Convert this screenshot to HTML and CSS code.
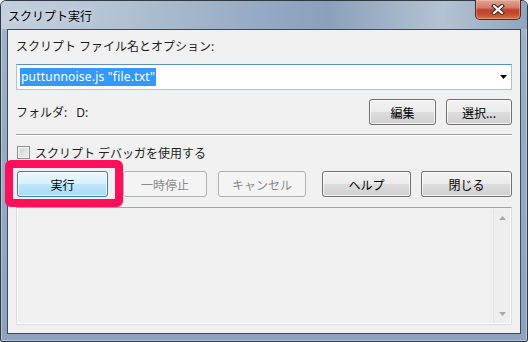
FILE: index.html
```html
<!DOCTYPE html>
<html lang="ja">
<head>
    <meta charset="UTF-8">
    <title>スクリプト実行</title>
    <link rel="stylesheet" href="styles.css">
</head>
<body>
    <div class="window">
        <div class="titlebar">
            <span class="title">スクリプト実行</span>
            <div class="close-btn">
                <svg width="14" height="11" viewBox="0 0 14 11">
                    <path d="M3 2 L11 9 M11 2 L3 9" stroke="#3a2a2a" stroke-width="4.2" stroke-linecap="square" fill="none"/>
                    <path d="M3 2 L11 9 M11 2 L3 9" stroke="#ffffff" stroke-width="2.2" stroke-linecap="square" fill="none"/>
                </svg>
            </div>
        </div>

        <div class="client">
            <div class="label">スクリプト ファイル名とオプション:</div>
            <div class="combo">
                <span class="combo-text">puttunnoise.js "file.txt"</span>
                <svg class="combo-arrow" width="7" height="4" viewBox="0 0 7 4">
                    <path d="M0 0 H7 L3.5 4 Z" fill="#000"/>
                </svg>
            </div>

            <div class="folder-row">
                <span class="folder">フォルダ:<span class="folder-path">D:</span></span>
                <button class="btn btn-edit">編集</button>
                <button class="btn btn-select">選択...</button>
            </div>

            <div class="sep"></div>

            <div class="check-row">
                <span class="checkbox"></span>
                <span>スクリプト デバッガを使用する</span>
            </div>

            <div class="action-row">
                <button class="btn btn-default btn-run">実行</button>
                <button class="btn btn-pause" disabled>一時停止</button>
                <button class="btn btn-cancel" disabled>キャンセル</button>
                <button class="btn btn-help">ヘルプ</button>
                <button class="btn btn-close">閉じる</button>
            </div>

            <div class="output">
                <div class="output-body"></div>
                <div class="scrollbar">
                    <svg width="7" height="4" viewBox="0 0 7 4"><path d="M0 4 H7 L3.5 0 Z" fill="#a8a8a8"/></svg>
                    <svg width="7" height="4" viewBox="0 0 7 4"><path d="M0 0 H7 L3.5 4 Z" fill="#a8a8a8"/></svg>
                </div>
            </div>
        </div>
    </div>

    <div class="highlight"></div>
</body>
</html>
```

FILE: styles.css
```css
* {
    box-sizing: border-box;
}

html, body {
    margin: 0;
    padding: 0;
}

body {
    position: relative;
    width: 528px;
    height: 342px;
    overflow: hidden;
    background: #ffffff;
    font-family: "Noto Sans", "Noto Sans CJK JP", sans-serif;
    font-size: 12px;
    color: #1e1e1e;
}

.window {
    width: 528px;
    height: 342px;
    border: 1px solid #33383f;
    border-radius: 6px 6px 2px 2px;
    background: linear-gradient(to bottom, #b3c2d3 0, #9cb0c7 40px, #8ca2bd 100%);
    box-shadow: inset 0 0 0 1px rgba(255,255,255,0.35);
    padding: 0 6px 7px 6px;
    display: flex;
    flex-direction: column;
}

.titlebar {
    height: 28px;
    display: flex;
    align-items: center;
    margin: 0 -6px;
    padding: 0 6px 0 6px;
    border-radius: 5px 5px 0 0;
    background: linear-gradient(to right, #c3d0dd 0%, #b3c2d3 22%, #96abc4 48%, #8aa0bb 62%, #b4c3d3 84%, #8fa5bf 100%);
}

.title {
    font-family: "Noto Sans CJK JP", sans-serif;
    font-size: 12px;
    color: #000;
    padding-left: 1px;
    text-shadow: 0 0 6px rgba(255,255,255,0.7);
}

.close-btn {
    margin-left: auto;
    align-self: flex-start;
    margin-top: -1px;
    width: 46px;
    height: 20px;
    border: 1px solid #4b2a26;
    border-top: none;
    border-radius: 0 0 5px 5px;
    background: linear-gradient(to bottom, #e3a393 0%, #d27c67 40%, #c0422d 52%, #c74a2e 75%, #dd7443 100%);
    box-shadow: inset 0 0 0 1px rgba(255,220,210,0.35);
    display: flex;
    align-items: center;
    justify-content: center;
}

.client {
    flex: 1;
    border: 1px solid #3d4a5a;
    background: #f0f0f0;
    padding: 9px 8px 8px 8px;
    display: flex;
    flex-direction: column;
}

.label {
    line-height: 16px;
    height: 16px;
}

.combo {
    margin-top: 9px;
    height: 26px;
    background: #ffffff;
    border: 1px solid #a9c4dd;
    border-top-color: #5a90bb;
    display: flex;
    align-items: center;
    padding: 0 4px 0 3px;
}

.combo-text {
    background: #3399ff;
    color: #ffffff;
    line-height: 18px;
    height: 18px;
    padding: 0 1px;
    letter-spacing: 0.2px;
}

.combo-arrow {
    margin-left: auto;
}

.folder-row {
    margin-top: 9px;
    height: 26px;
    display: flex;
    align-items: center;
}

.folder {
    margin-right: auto;
}

.folder-path {
    margin-left: 9px;
}

.sep {
    margin-top: 9px;
    height: 2px;
    border-top: 1px solid #a0a0a0;
    border-bottom: 1px solid #ffffff;
}

.check-row {
    margin-top: 10px;
    height: 13px;
    display: flex;
    align-items: center;
    gap: 5px;
    padding-left: 1px;
}

.checkbox {
    width: 13px;
    height: 13px;
    border: 1px solid #8e8f8f;
    background: linear-gradient(135deg, #c0c4ca 0%, #e4e5e7 60%, #f3f3f4 100%);
    box-shadow: inset 0 0 0 1px #f4f4f4, inset 0 0 0 2px #e4e4e4;
}

.action-row {
    margin-top: 12px;
    height: 26px;
    display: flex;
}

.btn {
    height: 26px;
    padding: 0;
    font-family: "Noto Sans CJK JP", sans-serif;
    font-size: 12px;
    color: #000;
    border: 1px solid #707070;
    border-radius: 3px;
    background: linear-gradient(to bottom, #f2f2f2 0%, #ebebeb 49%, #dddddd 51%, #cfcfcf 100%);
    box-shadow: inset 0 0 0 1px rgba(255,255,255,0.75);
}

.btn:disabled {
    color: #8b8b8b;
    border-color: #adb2b5;
    background: #f4f4f4;
    box-shadow: none;
}

.btn-default {
    border-color: #3c7fb1;
    background: linear-gradient(to bottom, #eaf6fd 0%, #d9f0fc 49%, #bee6fd 51%, #a7d9f5 100%);
}

.btn-edit {
    width: 67px;
}

.btn-select {
    width: 66px;
    margin-left: 10px;
}

.btn-run {
    width: 91px;
    margin-left: 1px;
}

.btn-pause {
    width: 84px;
    margin-left: 15px;
}

.btn-cancel {
    width: 88px;
    margin-left: 11px;
}

.btn-help {
    width: 89px;
    margin-left: 16px;
}

.btn-close {
    width: 91px;
    margin-left: 10px;
}

.output {
    margin-top: 10px;
    height: 118px;
    border: 1px solid #dcdde3;
    border-top-color: #a3a3a8;
    box-shadow: inset 1px 0 #ffffff, inset -1px 0 #ffffff, inset 0 -1px #ffffff;
    display: flex;
    padding: 1px;
}

.output-body {
    flex: 1;
    background: #f0f0f0;
}

.scrollbar {
    width: 17px;
    border-left: 1px solid #e4e4e4;
    background: #eeeeee;
    display: flex;
    flex-direction: column;
    justify-content: space-between;
    align-items: center;
    padding: 7px 0;
}

.highlight {
    position: absolute;
    left: 5px;
    top: 160px;
    width: 118px;
    height: 47px;
    border: 8px solid #fe0f5b;
    border-radius: 6px;
}
```
